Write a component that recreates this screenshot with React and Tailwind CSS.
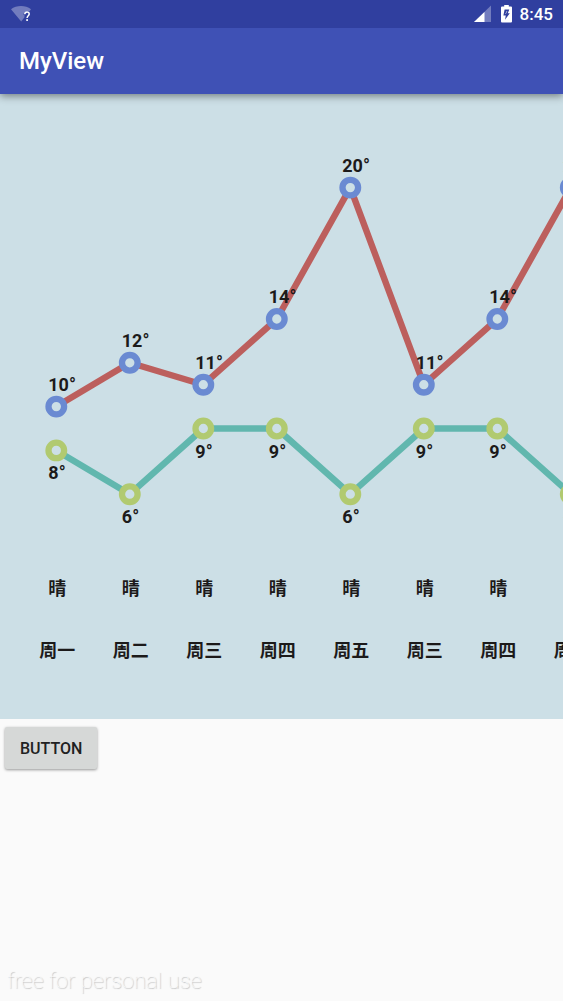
const DAYS = [
  { day: '周一', weather: '晴', high: 10, low: 8 },
  { day: '周二', weather: '晴', high: 12, low: 6 },
  { day: '周三', weather: '晴', high: 11, low: 9 },
  { day: '周四', weather: '晴', high: 14, low: 9 },
  { day: '周五', weather: '晴', high: 20, low: 6 },
  { day: '周三', weather: '晴', high: 11, low: 9 },
  { day: '周四', weather: '晴', high: 14, low: 9 },
  { day: '周五', weather: '晴', high: 20, low: 6 },
];

const STEP = 73.5;
const xOf = (i) => 56.3 + i * STEP;
const yOf = (t) => 312.6 - (t - 10) * 21.9;

function Series({ field, line, ring, labelOffset }) {
  const points = DAYS.map((d, i) => ({ x: xOf(i), y: yOf(d[field]), t: d[field] }));
  return (
    <g>
      <polyline
        points={points.map((p) => `${p.x},${p.y}`).join(' ')}
        fill="none"
        stroke={line}
        strokeWidth="6.4"
        strokeLinejoin="bevel"
      />
      {points.map((p, i) => (
        <g key={i}>
          <circle cx={p.x} cy={p.y} r="7.8" fill="#ccdfe6" stroke={ring} strokeWidth="6.3" />
          <text x={p.x - 8} y={p.y + labelOffset}>{p.t}°</text>
        </g>
      ))}
    </g>
  );
}

function WeatherChart() {
  return (
    <section aria-label="Weather" className="overflow-x-auto bg-[#ccdfe6] [scrollbar-width:none]">
      <svg
        width={xOf(DAYS.length - 1) + 56}
        height="625"
        className="block fill-[#1c1a1a] font-['Roboto','Noto_Sans_CJK_SC',sans-serif] text-lg font-bold"
      >
        <Series field="high" line="#bc5f5d" ring="#6a8ad2" labelOffset={-16} />
        <Series field="low" line="#61b7ae" ring="#b1ca70" labelOffset={29} />
        {DAYS.map((d, i) => (
          <g key={i} textAnchor="middle">
            <text x={xOf(i) + 1} y="501">{d.weather}</text>
            <text x={xOf(i) + 1} y="563">{d.day}</text>
          </g>
        ))}
      </svg>
    </section>
  );
}

function StatusBar() {
  return (
    <div className="flex h-7 items-center bg-[#303f9f] px-[10px] text-white">
      <svg width="24" height="20" viewBox="0 0 24 20" aria-hidden="true">
        <path d="M1 5.2C6.5 1 15.5 1 21 5.2L19.5 7.4C16.500 6.200 13.500 8 13.500 11H14.500V13.200L11.200 17.500Z" fill="#fff" fillOpacity=".32" />
        <path d="M14.800 10.200C14.800 7.200 19.200 7.200 19.200 9.900C19.200 11.600 17.100 11.900 17.100 14" fill="none" stroke="#fff" strokeWidth="1.500" />
        <rect x="16.200" y="15.200" width="1.800" height="1.700" fill="#fff" />
      </svg>
      <svg className="ml-auto" width="17" height="18" viewBox="0 0 17 18" aria-hidden="true">
        <path d="M17 .5V17H0Z" fill="#fff" fillOpacity=".32" />
        <path d="M10.500 7V17H0Z" fill="#fff" />
      </svg>
      <svg className="ml-[10px]" width="11" height="18" viewBox="0 0 11 18" aria-hidden="true">
        <path d="M3.200 0H7.800V1.500H10Q11 1.500 11 2.500V16.500Q11 17.500 10 17.500H1Q0 17.500 0 16.500V2.500Q0 1.500 1 1.500H3.200Z" fill="#fff" />
        <path d="M3.600 4.500H8.300L6.800 8.200H8.800L4 14.800L4.800 10.500H2.400Z" fill="#303f9f" />
        <path d="M5.600 6H6.400L4.900 9.100H4.200Z" fill="#fff" fillOpacity=".75" />
      </svg>
      <span className="ml-2 text-[17px] leading-7 font-medium">8:45</span>
    </div>
  );
}

export default function App() {
  return (
    <main className="flex min-h-screen flex-col bg-[#fafafa] font-['Roboto',sans-serif]">
      <header className="relative z-10 shadow-[0_2px_8px_rgba(0,0,0,0.45)]">
        <StatusBar />
        <div className="flex h-[66px] items-center bg-[#3f51b5] px-[19px]">
          <h1 className="text-2xl font-medium text-white">MyView</h1>
        </div>
      </header>
      <WeatherChart />
      <div className="px-[5px] py-2">
        <button
          type="button"
          className="h-[42px] rounded-xs bg-[#d6d8d7] px-[15px] pt-0.5 text-base font-medium text-[#212121] shadow-[0_1px_3px_rgba(0,0,0,0.4)]"
        >
          BUTTON
        </button>
      </div>
      <p className="mt-auto px-[7px] pb-1 text-[22px] leading-8 font-thin text-[#fafafa] [text-shadow:1px_1px_1px_#b4b4b4]">
        free for personal use
      </p>
    </main>
  );
}
